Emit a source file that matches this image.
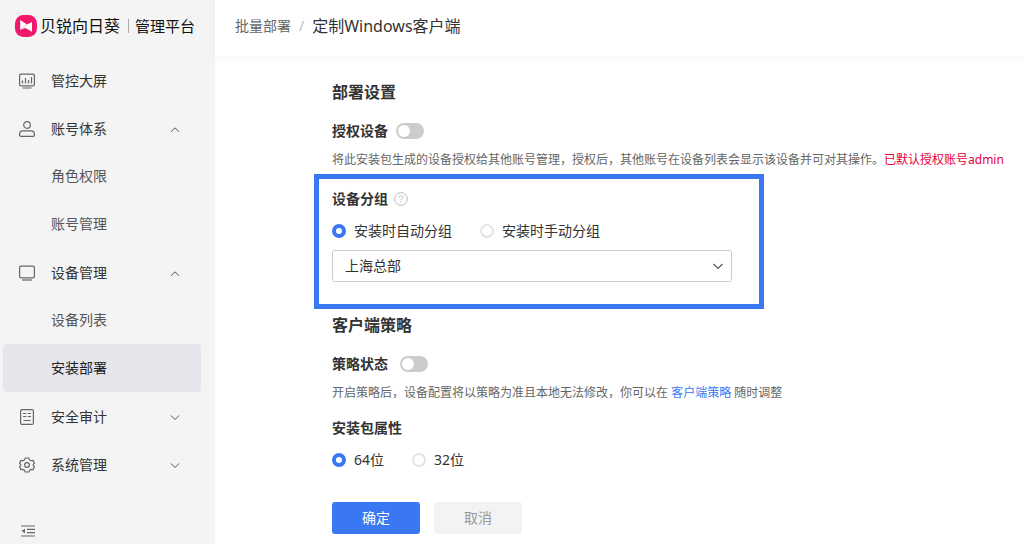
<script setup lang="ts">
import { ref } from 'vue';

const menu = [
    { name: '管控大屏', icon: 'screen' },
    { name: '账号体系', icon: 'user', open: true, children: ['角色权限', '账号管理'] },
    { name: '设备管理', icon: 'device', open: true, children: ['设备列表', '安装部署'] },
    { name: '安全审计', icon: 'audit', open: false, children: [] },
    { name: '系统管理', icon: 'gear', open: false, children: [] },
];
const active = ref('安装部署');

const authorize = ref(false);
const strategy = ref(false);
const groupMode = ref('auto');
const group = ref('上海总部');
const arch = ref('64');
</script>

<template>
    <div class="layout">
        <aside class="sidebar">
            <div class="brand">
                <svg class="logo" viewBox="0 0 22 22">
                    <rect width="22" height="22" rx="8.5" fill="#f0186c" />
                    <path d="M5.2 5L12 9.6L17 7V16.8L10.4 13L5.2 14.8Z" fill="#fff" />
                    <path d="M5.2 14.8L12 9.6" stroke="#f7a6c6" stroke-width="0.8" />
                </svg>
                <span class="brandName">贝锐向日葵</span>
                <span class="brandLine"></span>
                <span class="brandSub">管理平台</span>
            </div>
            <nav class="menu">
                <template v-for="item in menu" :key="item.name">
                    <button type="button" class="menuItem">
                        <svg v-if="item.icon == 'screen'" class="icon" viewBox="0 0 16 16">
                            <rect x="0.6" y="1.1" width="14.8" height="11.8" rx="1.5" />
                            <path d="M3.5 7.5V10.5M6.5 5V10.5M9.5 7V10.5M12.5 4V10.5M3.5 15H12.5" />
                        </svg>
                        <svg v-else-if="item.icon == 'user'" class="icon" viewBox="0 0 16 16">
                            <circle cx="8" cy="4" r="3.3" />
                            <path d="M3.8 9.9H12.2C14.2 9.9 15.4 11.3 15.4 13.2V14C15.4 14.8 15 15.4 14.2 15.4H1.8C1 15.4 0.6 14.8 0.6 14V13.2C0.6 11.3 1.8 9.9 3.8 9.9Z" />
                        </svg>
                        <svg v-else-if="item.icon == 'device'" class="icon" viewBox="0 0 16 16">
                            <rect x="0.6" y="1.1" width="14.8" height="11.8" rx="1.5" />
                            <path d="M3 15H13" />
                        </svg>
                        <svg v-else-if="item.icon == 'audit'" class="icon" viewBox="0 0 16 16">
                            <rect x="1.6" y="0.6" width="12.8" height="14.8" rx="1.5" />
                            <path d="M4 4.5H7.3M8.7 4.5H12M4 7.5H7.3M8.7 7.5H12M4.5 11.5H11.5" />
                        </svg>
                        <svg v-else class="icon" viewBox="0 0 16 16">
                            <path d="M6.2 1H9.8L10.6 2.9L12 3.7L14 3.4L15.4 6.2L14.2 7.7V8.4L15.4 9.9L14 12.6L12 12.4L10.6 13.2L9.8 15H6.2L5.4 13.2L4 12.4L2 12.6L0.6 9.9L1.8 8.4V7.7L0.6 6.2L2 3.4L4 3.7L5.4 2.9Z" />
                            <circle cx="8" cy="8" r="2.4" />
                        </svg>
                        <span class="menuName">{{ item.name }}</span>
                        <svg v-if="item.children" class="arrow" viewBox="0 0 10 10">
                            <path v-if="item.open" d="M1 7.8L5 3.8L9 7.8" />
                            <path v-else d="M1 3.5L5 7.5L9 3.5" />
                        </svg>
                    </button>
                    <div v-if="item.open" class="subMenu">
                        <button
                            v-for="child in item.children"
                            :key="child"
                            type="button"
                            class="subItem"
                            :class="{ active: child == active }"
                            @click="active = child"
                        >{{ child }}</button>
                    </div>
                </template>
            </nav>
            <button type="button" class="fold" aria-label="收起菜单">
                <svg viewBox="0 0 14 12">
                    <path d="M0 1H14M6 4.4H14M6 7.6H14M0 11H14" fill="none" stroke="#666" stroke-width="1.2" />
                    <path d="M0.5 6L4 3.8V8.2Z" fill="#666" />
                </svg>
            </button>
        </aside>

        <div class="page">
            <header class="topbar">
                <a href="#" class="crumb">批量部署</a>
                <span class="slash">/</span>
                <span class="current">定制Windows客户端</span>
            </header>

            <main class="content">
                <h2>部署设置</h2>
                <div class="field">
                    <label for="authorize">授权设备</label>
                    <input id="authorize" v-model="authorize" type="checkbox" class="switch">
                </div>
                <p class="desc">将此安装包生成的设备授权给其他账号管理，授权后，其他账号在设备列表会显示该设备并可对其操作。<span class="warn">已默认授权账号admin</span></p>

                <section class="groupBox">
                    <div class="groupTitle">
                        <h3>设备分组</h3>
                        <svg class="help" viewBox="0 0 14 14">
                            <circle cx="7" cy="7" r="6.3" />
                            <path d="M5 5.6C5 4.3 5.9 3.6 7 3.6C8.2 3.6 9 4.3 9 5.4C9 6.8 7 6.9 7 8.5M7 9.6V10.8" />
                        </svg>
                    </div>
                    <div class="radios">
                        <label><input v-model="groupMode" type="radio" name="groupMode" value="auto">安装时自动分组</label>
                        <label><input v-model="groupMode" type="radio" name="groupMode" value="manual">安装时手动分组</label>
                    </div>
                    <div class="selectBox">
                        <select v-model="group" aria-label="设备分组">
                            <option>上海总部</option>
                        </select>
                        <svg viewBox="0 0 10 10">
                            <path d="M0.5 3L5 7.5L9.5 3" />
                        </svg>
                    </div>
                </section>

                <h2>客户端策略</h2>
                <div class="field wide">
                    <label for="strategy">策略状态</label>
                    <input id="strategy" v-model="strategy" type="checkbox" class="switch">
                </div>
                <p class="desc">开启策略后，设备配置将以策略为准且本地无法修改，你可以在 <a href="#">客户端策略</a> 随时调整</p>

                <h3 class="packTitle">安装包属性</h3>
                <div class="radios">
                    <label><input v-model="arch" type="radio" name="arch" value="64">64位</label>
                    <label><input v-model="arch" type="radio" name="arch" value="32">32位</label>
                </div>

                <div class="actions">
                    <button type="button" class="btn primary">确定</button>
                    <button type="button" class="btn">取消</button>
                </div>
            </main>
        </div>
    </div>
</template>

<style>
body {
    margin: 0;
    background: #fff;
}
</style>

<style scoped>
.layout {
    display: flex;
    min-height: 100vh;
    font-family: "Noto Sans", "Noto Sans CJK SC", sans-serif;
    font-size: 14px;
    line-height: 24px;
    color: #333;
}
.layout * {
    box-sizing: border-box;
}
button, select {
    font: inherit;
    color: inherit;
    border: 0;
    background: none;
    cursor: pointer;
}
h2, h3, p {
    margin: 0;
}
a {
    text-decoration: none;
}

.sidebar {
    display: flex;
    flex-direction: column;
    flex: 0 0 215px;
    background: #f4f4f5;
}
.brand {
    display: flex;
    align-items: center;
    height: 52px;
    padding-left: 15px;
    color: #111;
}
.logo {
    width: 22px;
    height: 22px;
    margin-right: 3px;
}
.brandName {
    font-size: 16px;
}
.brandLine {
    width: 1px;
    height: 14px;
    margin: 0 6px 0 8px;
    background: #aaa;
}
.brandSub {
    font-size: 15px;
}
.menu {
    display: flex;
    flex-direction: column;
    padding: 5px 14px 0 3px;
}
.menuItem {
    display: flex;
    align-items: center;
    height: 48px;
    padding: 0 21px 0 16px;
}
.icon {
    width: 16px;
    height: 16px;
    margin-right: 16px;
    fill: none;
    stroke: #666;
    stroke-width: 1.2;
}
.menuName {
    flex: 1;
    text-align: left;
}
.arrow {
    width: 10px;
    height: 10px;
    fill: none;
    stroke: #555;
}
.subMenu {
    display: flex;
    flex-direction: column;
    margin: -1px 0 1px;
}
.subItem {
    height: 48px;
    padding: 0 0 0 48px;
    border-radius: 4px;
    text-align: left;
    color: #555;
}
.subItem.active {
    background: #e4e6ec;
    color: #222;
}
.fold {
    display: flex;
    width: 14px;
    margin: auto 0 7px 21px;
    padding: 0;
}
.fold svg {
    width: 14px;
    height: 12px;
}

.page {
    flex: 1;
    min-width: 0;
}
.topbar {
    display: flex;
    align-items: center;
    height: 56px;
    padding: 0 20px 4px;
    box-shadow: 0 2px 8px rgba(0, 0, 0, 0.04);
}
.crumb {
    color: #666;
}
.slash {
    margin: 0 8px;
    color: #bbb;
}
.current {
    font-size: 16px;
}

.content {
    padding: 24px 16px 10px 117px;
}
h2 {
    font-size: 16px;
}
h3, .field label {
    font-size: 14px;
    font-weight: 700;
}
.field {
    display: flex;
    align-items: center;
    gap: 8px;
    margin-top: 15px;
}
.field.wide {
    gap: 12px;
}
.switch {
    appearance: none;
    width: 28px;
    height: 16px;
    margin: 0;
    padding: 2px;
    border-radius: 8px;
    background: #ccc;
    cursor: pointer;
}
.switch::before {
    content: "";
    display: block;
    width: 12px;
    height: 12px;
    border-radius: 50%;
    background: #fff;
}
.switch:checked {
    padding-left: 14px;
    background: #3a77f2;
}
.desc {
    margin-top: 7px;
    font-size: 12px;
    line-height: 20px;
    color: #666;
}
.desc a {
    color: #3a77f2;
}
.warn {
    color: #e6003e;
}

.groupBox {
    max-width: 450px;
    margin: 4px 0 4px -18px;
    padding: 8px 27px 22px 13px;
    border: 5px solid #3a77f2;
}
.groupTitle {
    display: flex;
    align-items: center;
    gap: 6px;
}
.help {
    width: 14px;
    height: 14px;
    fill: none;
    stroke: #bbb;
}
.radios {
    display: flex;
    gap: 28px;
    margin-top: 8px;
}
.radios label {
    display: flex;
    align-items: center;
    gap: 8px;
}
.radios input {
    appearance: none;
    width: 14px;
    height: 14px;
    margin: 0;
    border: 2px solid #e4e4e4;
    border-radius: 50%;
    background: #fff;
}
.radios input:checked {
    border: 4px solid #3a77f2;
}
.selectBox {
    position: relative;
    margin-top: 7px;
}
.selectBox select {
    display: block;
    appearance: none;
    width: 100%;
    height: 32px;
    padding: 0 32px 0 12px;
    border: 1px solid #ccc;
    border-radius: 3px;
    background: #fff;
}
.selectBox svg {
    position: absolute;
    top: 11px;
    right: 9px;
    width: 10px;
    height: 10px;
    fill: none;
    stroke: #555;
    stroke-width: 1.2;
    pointer-events: none;
}
.packTitle {
    margin-top: 13px;
}
.radios + .actions {
    margin-top: 30px;
}
.actions {
    display: flex;
    gap: 14px;
}
.btn {
    width: 88px;
    height: 32px;
    border-radius: 3px;
    background: #f2f3f5;
    color: #999;
}
.btn.primary {
    background: #3a77f2;
    color: #fff;
}
</style>
